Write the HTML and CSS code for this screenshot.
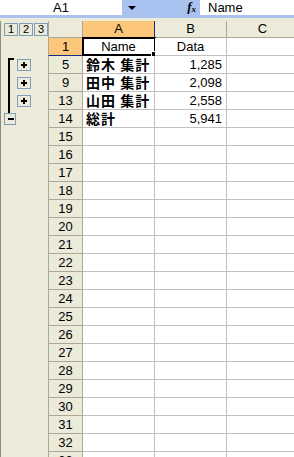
FILE: index.html
```html
<!DOCTYPE html>
<html lang="ja">

<head>
    <meta charset="UTF-8">
    <title>集計</title>
    <link rel="stylesheet" href="styles.css">
</head>

<body>
    <div class="fbar">
        <div class="namebox">A1</div>
        <div class="fbtns">
            <span class="arrow"></span>
            <span class="fx"><i>f</i><sub>x</sub></span>
        </div>
        <div class="fcontent">Name</div>
    </div>

    <div class="sheet">
        <div class="outline">
            <div class="levels"><span>1</span><span>2</span><span>3</span></div>
            <div class="orow"></div>
            <div class="group">
                <div class="orow"><span class="obtn plus"></span></div>
                <div class="orow"><span class="obtn plus"></span></div>
                <div class="orow"><span class="obtn plus"></span></div>
            </div>
            <div class="orow"><span class="obtn minus"></span></div>
        </div>

        <div class="grid">
            <div class="row head">
                <div class="rh corner"></div>
                <div class="ch sel">A</div>
                <div class="ch">B</div>
                <div class="ch last">C</div>
            </div>
            <div id="rows"></div>
        </div>
    </div>

    <script>
        // rows shown after grouping
        const data = [
            { n: 1, a: 'Name', b: 'Data', head: true },
            { n: 5, a: '鈴木 集計', b: '1,285' },
            { n: 9, a: '田中 集計', b: '2,098' },
            { n: 13, a: '山田 集計', b: '2,558' },
            { n: 14, a: '総計', b: '5,941' }
        ];
        for (let i = 15; i <= 33; i++) data.push({ n: i, a: '', b: '' });

        const rows = document.getElementById('rows');
        data.forEach((r) => {
            const isSel = r.n === 1;
            rows.innerHTML += `
                <div class="row">
                    <div class="rh${isSel ? ' sel' : ''}">${r.n}</div>
                    <div class="cell ${r.head ? 'center' : 'jp'}">${r.a}${isSel ? '<span class="cursor"></span>' : ''}</div>
                    <div class="cell ${r.head ? 'center' : 'num'}">${r.b}</div>
                    <div class="cell last"></div>
                </div>
            `;
        });
    </script>
</body>

</html>
```

FILE: styles.css
```css
:root {
    --beige: #ecead9;
    --hdr-border: #aca899;
    --grid: #c0c0c0;
    --orange: #fcc77a;
    --bar-blue: #a9c2f0;
    --frame-blue: #7f9db9;
    --sel-blue: #1a2a8c;
}

body {
    margin: 0;
    height: 457px;
    overflow: hidden;
    background-color: var(--beige);
    font-family: "Liberation Sans", Arial, sans-serif;
    font-size: 13px;
    color: #000000;
}

/* formula bar */
.fbar {
    display: flex;
    height: 15px;
    line-height: 15px;
    background-color: var(--bar-blue);
    border-bottom: 3px solid var(--bar-blue);
}

.namebox {
    width: 122px;
    background-color: #ffffff;
    text-align: center;
}

.fbtns {
    width: 78px;
    display: flex;
    align-items: center;
}

.arrow {
    margin-left: 6px;
    border-left: 4px solid transparent;
    border-right: 4px solid transparent;
    border-top: 4px solid #000000;
}

.fx {
    margin-left: auto;
    margin-right: 4px;
    font-family: "Liberation Serif", serif;
    font-weight: bold;
    font-size: 13px;
}

.fx sub {
    font-size: 9px;
    font-style: italic;
    vertical-align: -1px;
}

.fcontent {
    flex: 1;
    background-color: #ffffff;
    padding-left: 8px;
}

/* sheet */
.sheet {
    display: flex;
    margin-top: 3px;
}

.outline {
    width: 47px;
    flex-shrink: 0;
    border-left: 1px solid #8e8b7c;
}

.levels {
    height: 17px;
    display: flex;
    align-items: center;
    gap: 1px;
    padding-left: 3px;
}

.levels span {
    width: 12px;
    height: 11px;
    line-height: 11px;
    text-align: center;
    font-size: 11px;
    border: 1px solid var(--frame-blue);
}

.orow {
    height: 18px;
    display: flex;
    align-items: center;
}

.group {
    position: relative;
}

.group::before {
    content: "";
    position: absolute;
    left: 7px;
    top: 2px;
    bottom: -5px;
    width: 6px;
    border-left: 2px solid #000000;
    border-top: 2px solid #000000;
    box-sizing: border-box;
}

.obtn {
    position: relative;
    box-sizing: border-box;
    border: 1px solid var(--frame-blue);
    background-color: var(--beige);
}

.obtn.plus {
    width: 14px;
    height: 12px;
    margin-left: 16px;
}

.obtn.minus {
    width: 12px;
    height: 12px;
    margin-left: 3px;
}

.obtn::before,
.plus::after {
    content: "";
    position: absolute;
    background-color: #000000;
}

.obtn::before {
    left: 3px;
    top: 4px;
    width: 6px;
    height: 2px;
}

.plus::before {
    left: 3px;
}

.plus::after {
    left: 5px;
    top: 2px;
    width: 2px;
    height: 6px;
}

/* grid */
.grid {
    flex: 1;
}

.row {
    display: flex;
    height: 18px;
}

.row.head {
    height: 17px;
}

.rh {
    width: 33px;
    flex-shrink: 0;
    text-align: center;
    line-height: 17px;
    background-color: var(--beige);
    border-left: 1px solid var(--hdr-border);
    border-right: 1px solid var(--hdr-border);
    border-bottom: 1px solid var(--hdr-border);
}

.rh.sel {
    background-color: var(--orange);
    border-bottom-color: var(--sel-blue);
}

.ch {
    width: 71px;
    flex-shrink: 0;
    text-align: center;
    line-height: 16px;
    border-right: 1px solid var(--hdr-border);
    border-bottom: 1px solid var(--hdr-border);
}

.ch.sel {
    background-color: var(--orange);
    border-right-color: var(--sel-blue);
}

.ch.last {
    flex: 1;
    border-right: none;
}

.cell {
    position: relative;
    width: 71px;
    flex-shrink: 0;
    line-height: 17px;
    background-color: #ffffff;
    border-right: 1px solid var(--grid);
    border-bottom: 1px solid var(--grid);
    white-space: nowrap;
}

.cell.last {
    flex: 1;
    border-right: none;
}

.center {
    text-align: center;
}

.num {
    text-align: right;
    padding-right: 4px;
    width: 67px;
}

.jp {
    padding-left: 3px;
    width: 68px;
    font-family: "Noto Sans CJK JP", sans-serif;
    font-weight: bold;
    font-size: 14px;
    line-height: 17px;
    letter-spacing: 1px;
}

.cursor {
    position: absolute;
    left: -1px;
    top: -1px;
    right: -2px;
    bottom: -1px;
    border: 2px solid #000000;
}

.cursor::after {
    content: "";
    position: absolute;
    right: -4px;
    bottom: -4px;
    width: 5px;
    height: 5px;
    background-color: #000000;
    border: 1px solid #ffffff;
}
```
